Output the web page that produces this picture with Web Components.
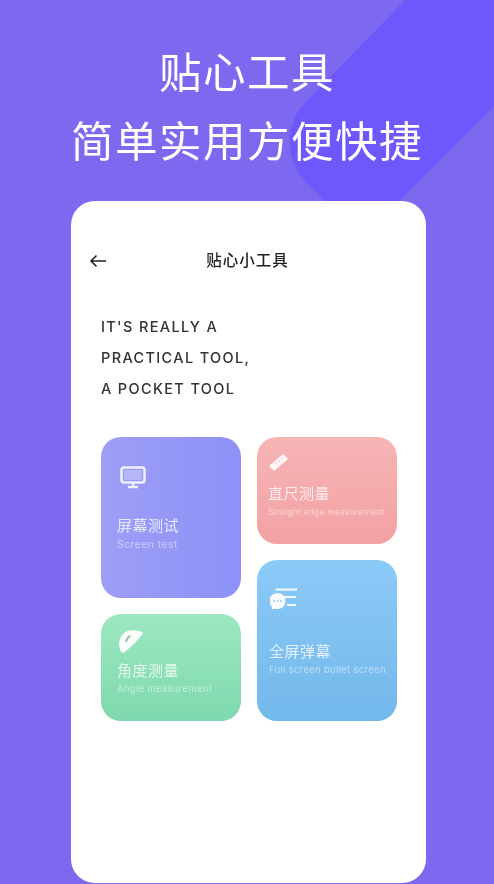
<!DOCTYPE html>
<html lang="zh">
<head>
<meta charset="utf-8">
<title>贴心工具</title>
<style>
  html, body { margin: 0; height: 100%; }
  body { background: #7c69f0; font-family: "Inter", "Noto Sans CJK SC", sans-serif; overflow: hidden; }
</style>
</head>
<body>
<promo-screen>
  <span slot="line">贴心工具</span>
  <span slot="line">简单实用方便快捷</span>
  <phone-card>
    <tool-card slot="left" tall tone="violet" title-text="屏幕测试" sub="Screen test">
      <svg slot="icon" width="26" height="23" viewBox="0 0 26 23" fill="none" stroke="#fff" stroke-opacity=".85">
        <rect x="1.5" y="1.5" width="23" height="15" rx="2.5" stroke-width="2.6"/>
        <rect x="4" y="4" width="18" height="10" fill="#fff" fill-opacity=".28" stroke="none"/>
        <path d="M13 17v3M8 21h10" stroke-width="2.4"/>
      </svg>
    </tool-card>
    <tool-card slot="left" tone="green" title-text="角度测量" sub="Angle measurement">
      <svg slot="icon" width="26" height="24" viewBox="0 0 26 24">
        <path d="M25.5 3 C20 0 12 -1 6 3 C1 7 -0.5 14 3 22 C5 23.5 6.5 22.5 8 21 C13 17 20 10 25.5 3 Z" fill="#fff" fill-opacity=".95"/>
        <path d="M8 12 C8.5 9 10 7 12.5 6" fill="none" stroke="#8fc9aa" stroke-width="2"/>
      </svg>
    </tool-card>
    <tool-card slot="right" tone="red" title-text="直尺测量" sub="Straight edge measurement">
      <svg slot="icon" width="19" height="17" viewBox="0 0 19 17">
        <path d="M14 0 L19 5 L5 17 L0 12 Z" fill="#fff" fill-opacity=".9"/>
        <path d="M12 3.5l1.5 1.6M9 6l1.5 1.6M6 8.6l1.5 1.6" stroke="#f2a5a8" stroke-width=".8"/>
      </svg>
    </tool-card>
    <tool-card slot="right" tall tone="blue" title-text="全屏弹幕" sub="Full screen bullet screen">
      <svg slot="icon" width="27" height="23" viewBox="0 0 27 23">
        <path d="M5.5 1.5H27M14 9h12M17 17h9" stroke="#fff" stroke-opacity=".9" stroke-width="2" fill="none"/>
        <circle cx="7.5" cy="13" r="8" fill="#fff" fill-opacity=".95"/>
        <path d="M2.5 18l-1 3.5 4.5-1.5z" fill="#fff"/>
        <circle cx="4" cy="13" r=".9" fill="#8cc6f3"/><circle cx="7.5" cy="13" r=".9" fill="#8cc6f3"/><circle cx="11" cy="13" r=".9" fill="#8cc6f3"/>
      </svg>
    </tool-card>
  </phone-card>
</promo-screen>

<template id="promo-screen">
  <style>
    :host { display: block; position: relative; height: 884px; overflow: hidden; }
    .band { position: absolute; left: 0; top: 0; }
    .hero {
      position: relative;
      padding-top: 38px;
      height: 163px;
      display: flex;
      flex-direction: column;
      align-items: center;
      color: #fff;
      font-size: 42.5px;
      font-weight: 400;
      line-height: 69px;
      letter-spacing: 1.5px;
      filter: blur(.5px);
    }
    ::slotted(span) { display: block; }
    .body { position: relative; display: flex; justify-content: center; padding-left: 3px; }
  </style>
  <svg class="band" width="494" height="884" viewBox="0 0 494 884">
    <path d="M405 0 L304 104 C284 125 286 160 304 180 L325 201 L399 201 L494 106 L494 0 Z" fill="#6e58fb"/>
  </svg>
  <div class="hero"><slot name="line"></slot></div>
  <div class="body"><slot></slot></div>
</template>

<template id="phone-card">
  <style>
    :host {
      display: block;
      box-sizing: border-box;
      width: 355px;
      height: 682px;
      background: #fff;
      border-radius: 24px;
      padding: 0 30px;
    }
    .nav {
      position: relative;
      display: flex;
      align-items: center;
      justify-content: center;
      height: 116px;
      padding-right: 2px;
      font-size: 15.5px;
      font-weight: 500;
      letter-spacing: 1px;
      color: #222;
      filter: blur(.4px);
    }
    .nav svg { position: absolute; left: -12px; top: 53px; }
    .intro {
      margin: -6px 0 0;
      height: 126px;
      font-size: 14.5px;
      line-height: 31px;
      letter-spacing: 1.35px;
      font-weight: 500;
      color: #333;
      filter: blur(.5px);
    }
    .grid { display: flex; gap: 16px; }
    .col { display: flex; flex-direction: column; gap: 16px; }
  </style>
  <div class="nav">
    <svg width="18" height="14" viewBox="0 0 18 14" fill="none" stroke="#222" stroke-width="1.6">
      <path d="M17 7H2M7.5 1.5L2 7l5.5 5.5"/>
    </svg>
    贴心小工具
  </div>
  <p class="intro">IT'S REALLY A<br>PRACTICAL TOOL,<br>A POCKET TOOL</p>
  <div class="grid">
    <div class="col"><slot name="left"></slot></div>
    <div class="col"><slot name="right"></slot></div>
  </div>
</template>

<template id="tool-card">
  <style>
    :host {
      display: flex;
      flex-direction: column;
      box-sizing: border-box;
      width: 140px;
      height: 107px;
      padding: 0 16px;
      border-radius: 20px;
      color: #fff;
      overflow: hidden;
      filter: blur(.3px);
    }
    :host([tall]) { height: 161px; }
    :host([tone="violet"]) { background: linear-gradient(90deg, #9d9ef6, #8d91f7); }
    :host([tone="red"]) { background: linear-gradient(180deg, #f7b5b6, #f3a1a3); padding-left: 11px; }
    :host([tone="green"]) { background: linear-gradient(180deg, #9ce8c0, #7fd9ae); }
    :host([tone="blue"]) { background: linear-gradient(180deg, #8ccaf8, #72b8ea); padding-left: 12px; }
    .icon { display: flex; align-items: flex-start; }
    :host([tone="violet"]) .icon { margin: 29px 0 0 3px; }
    :host([tone="red"]) .icon { margin: 17px 0 0 1px; }
    :host([tone="green"]) .icon { margin: 16px 0 0 1px; }
    :host([tone="blue"]) .icon { margin: 28px 0 0 1px; }
    .text { margin-top: auto; padding-bottom: 24px; filter: blur(.3px); }
    :host([tone="violet"]) .text { padding-bottom: 45px; }
    :host([tone="blue"]) .text { padding-bottom: 43px; }
    .title { font-size: 15px; line-height: 20px; letter-spacing: .5px; opacity: .78; }
    :host([tone="violet"]) .title { margin-bottom: 1px; }
    .sub { font-size: 9.5px; line-height: 16px; opacity: .5; white-space: nowrap; letter-spacing: .3px; }
    :host([tone="violet"]) .sub { font-size: 10.5px; letter-spacing: .4px; }
    :host([tone="red"]) .sub { font-size: 8.5px; letter-spacing: .2px; }
  </style>
  <div class="icon"><slot name="icon"></slot></div>
  <div class="text">
    <div class="title"></div>
    <div class="sub"></div>
  </div>
</template>

<script>
  function shadowFrom(el, id) {
    const root = el.attachShadow({ mode: 'open' });
    root.appendChild(document.getElementById(id).content.cloneNode(true));
    return root;
  }

  class PromoScreen extends HTMLElement {
    constructor() {
      super();
      shadowFrom(this, 'promo-screen');
    }
  }

  class PhoneCard extends HTMLElement {
    constructor() {
      super();
      shadowFrom(this, 'phone-card');
    }
  }

  class ToolCard extends HTMLElement {
    constructor() {
      super();
      shadowFrom(this, 'tool-card');
    }

    connectedCallback() {
      this.shadowRoot.querySelector('.title').textContent = this.getAttribute('title-text');
      this.shadowRoot.querySelector('.sub').textContent = this.getAttribute('sub');
    }
  }

  customElements.define('promo-screen', PromoScreen);
  customElements.define('phone-card', PhoneCard);
  customElements.define('tool-card', ToolCard);
</script>
</body>
</html>
